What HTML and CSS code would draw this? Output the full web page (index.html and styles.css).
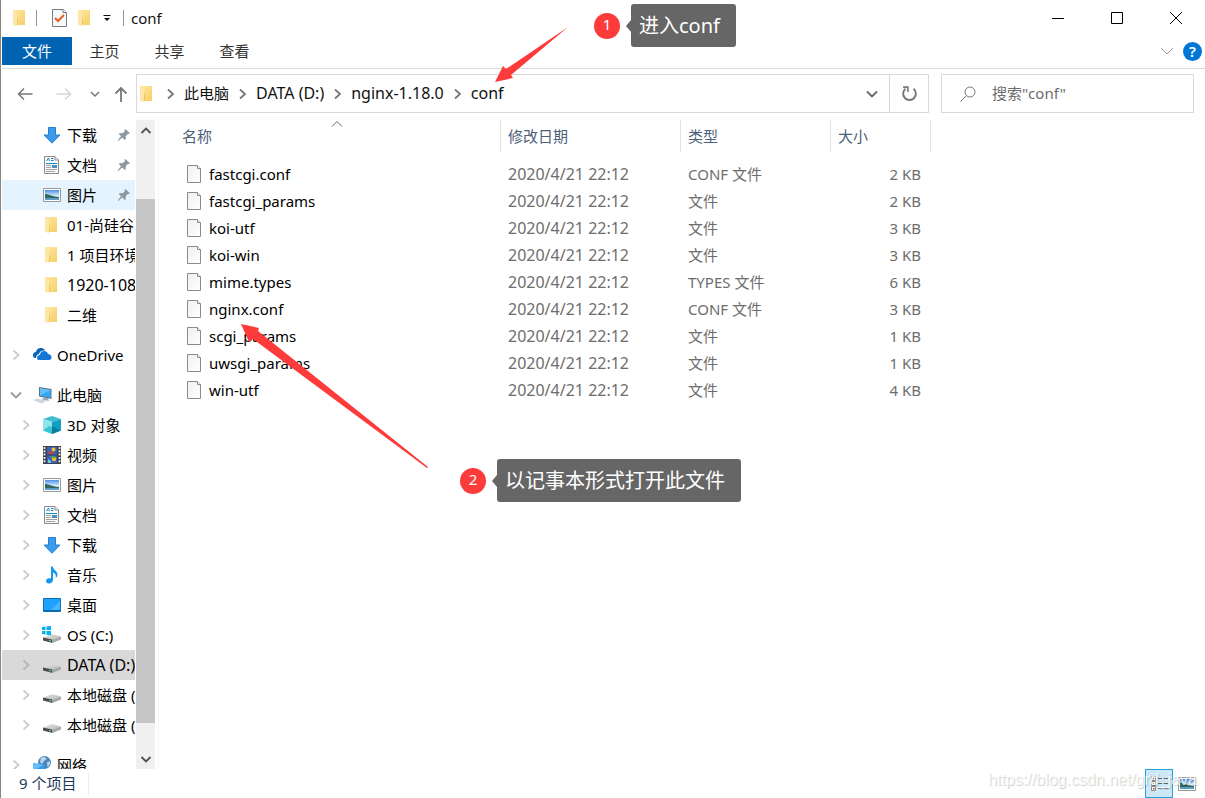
FILE: index.html
```html
<!DOCTYPE html>
<html lang="zh-CN">
<head>
<meta charset="utf-8">
<title>conf</title>
<link rel="stylesheet" href="styles.css">
</head>
<body>
<svg class="defs" width="0" height="0" aria-hidden="true">
  <defs>
    <linearGradient id="g-folder" x1="0" y1="0" x2="1" y2="1"><stop offset="0" stop-color="#ffe9a6"/><stop offset="1" stop-color="#f6cf66"/></linearGradient>
    <linearGradient id="g-sky" x1="0" y1="0" x2="0" y2="1"><stop offset="0" stop-color="#4f8fe8"/><stop offset=".6" stop-color="#d8f0fb"/><stop offset="1" stop-color="#a9cfe4"/></linearGradient>
    <linearGradient id="g-drive" x1="0" y1="0" x2="1" y2="1"><stop offset="0" stop-color="#e9e9e9"/><stop offset="1" stop-color="#b5b5b5"/></linearGradient>
    <linearGradient id="g-page" x1="0" y1="0" x2="1" y2="1"><stop offset="0" stop-color="#eef0f0"/><stop offset="1" stop-color="#ffffff"/></linearGradient>
  </defs>
  <symbol id="folder" viewBox="0 0 20 20"><path d="M3 2H15V17H3Z" fill="url(#g-folder)"/><path d="M3 2L7 4.500V18.500L3 16.500Z" fill="#ffe6a8"/><path d="M7.500 10V17" stroke="#eec65c" fill="none"/></symbol>
  <symbol id="chev" viewBox="0 0 12 12"><path d="M3.500 1.500L8.500 6L3.500 10.500" fill="none" stroke="currentColor" stroke-width="1.800"/></symbol>
  <symbol id="chevdown" viewBox="0 0 12 12"><path d="M1 3.500L6 8.500L11 3.500" fill="none" stroke="currentColor" stroke-width="1.800"/></symbol>
  <symbol id="pin" viewBox="0 0 14 14"><path d="M8.300 1L13 5.200L11.800 6L11 5.800L8.700 8.300L8.800 11L7.800 12L5.200 9.600L1.300 13L.7 12.500L4 8.300L1.800 6L2.800 5L5.700 5.200L8 3L7.500 1.800Z" fill="#8c98a2"/></symbol>
  <symbol id="download" viewBox="0 0 20 20"><path d="M6.500 2.500H13.500V10H18L10 18.200L2 10H6.500Z" fill="#3a9bea" stroke="#2480cf"/></symbol>
  <symbol id="docs" viewBox="0 0 20 20"><path d="M2.500 1.500H13L16.500 5V18.500H2.500Z" fill="#fbfbfb" stroke="#8a8a8a"/><path d="M13 1.500V5H16.500" fill="#eee" stroke="#8a8a8a"/><path d="M4.500 6L6.500 3L7.500 6M9 3.500H11.500M9 5.500H11.500" fill="none" stroke="#1687c9"/><path d="M4 8.500H15" stroke="#1687c9"/><path d="M4 10.500H9M4 12.500H9M4 14.500H15M4 16.500H13" stroke="#a2a2a2"/><path d="M10 10H15V13H10Z" fill="#4f8fbe"/></symbol>
  <symbol id="picture" viewBox="0 0 20 20"><path d="M1.500 3.500H18.500V16.500H1.500Z" fill="#fff" stroke="#999"/><path d="M3 5H17V15H3Z" fill="url(#g-sky)"/><path d="M3 9C7 9 9 11.500 17 12V13H3Z" fill="#31685a"/><path d="M3 13H17V15H3Z" fill="#5b9dc4"/></symbol>
  <symbol id="onedrive" viewBox="0 0 20 20"><path d="M1 10C1 8 2.500 7 4 7C4.500 4 7 2.500 9.500 3C11 3.200 12.500 4 13 5.500C9.500 5 7.500 7 7 9C5 9.500 4 11 4 13H3C1.500 13 1 11.500 1 10Z" fill="#0a63b8"/><path d="M5 13C5 11 6.500 10 8 10C8 7.500 10 6 12 6C14 6 15.500 7.200 16 9C18 9 19.500 10.500 19.500 12.500C19.500 14 18.500 15 17 15H7C5.800 15 5 14.200 5 13Z" fill="#1177d7"/></symbol>
  <symbol id="pc" viewBox="0 0 20 20"><path d="M7 2L19.500 4V14L7 11.500Z" fill="#5b7386"/><path d="M8 3.200L18.700 5V12.700L8 10.600Z" fill="#35a8f3"/><path d="M8 3.200L18.700 5L8 10.600Z" fill="#64bffa"/><path d="M11.500 12.500L16 13.300L17 16L10 14.500Z" fill="#9aa9b5"/><path d="M1 15L6 13.500L14.500 16L9.500 18.500Z" fill="#cdd4da"/></symbol>
  <symbol id="cube" viewBox="0 0 20 20"><path d="M10 1L19 4L10 7L1 4Z" fill="#3dbdd0"/><path d="M1 4L10 7V19L1 15.500Z" fill="#8fe5ec"/><path d="M19 4L10 7V19L19 15.500Z" fill="#13a0c2"/><path d="M1 15.500L7 11L10 12V19Z" fill="#38c4d5"/><path d="M10 11L19 15.500L10 19Z" fill="#0c7f9f"/></symbol>
  <symbol id="video" viewBox="0 0 20 20"><path d="M1 1H19V19H1Z" fill="#3f3f46"/><path d="M2.500 2V18M17.500 2V18" stroke="#ececec" stroke-width="1.800" stroke-dasharray="2 1.300"/><path d="M5 2H15V9.500H5ZM5 10.500H15V18H5Z" fill="#3564c0"/><circle cx="11.500" cy="4.500" r="2" fill="#edc22f"/><path d="M7 6L12 7L11 9H6Z" fill="#c5433b"/><circle cx="12" cy="14" r="2.200" fill="#edc22f"/><path d="M9 11H13V13H8Z" fill="#50a144"/><path d="M6 14L9 16V18H6Z" fill="#7ec0ee"/></symbol>
  <symbol id="music" viewBox="0 0 20 20"><path d="M9 1.500H11C11 5 15.500 6 15.500 9.500C15.500 11 14.500 12.500 13.500 13C15 9.500 12 8 11 7.500V14.500C11 17 9 18.500 7 18.500C5 18.500 4 17.300 4 16C4 13.800 6.500 12.500 9 13.500Z" fill="#1297ee"/></symbol>
  <symbol id="desktop" viewBox="0 0 20 20"><path d="M1.500 3.500H18.500V16.500H1.500Z" fill="#1ea2fd" stroke="#0872b9"/><path d="M9 15L18 6V15Z" fill="#49b5ff"/><path d="M2 15.500H18" stroke="#0869a8"/></symbol>
  <symbol id="drive" viewBox="0 0 20 20"><path d="M1 12.500L10 9L19 11.500L10.500 14.500Z" fill="url(#g-drive)"/><path d="M1 12.500L10.500 14.500V18L1 15.500Z" fill="#4c4c4c"/><path d="M10.500 14.500L19 11.500V14.500L10.500 18Z" fill="#a8a8a8"/><path d="M7 15.700H9" stroke="#58d26a" stroke-width="1.300"/></symbol>
  <symbol id="osdrive" viewBox="0 0 20 20"><use href="#drive"/><path d="M0 2L3.500 1.500V5H0ZM4.500 1.400L9 1V5H4.500ZM0 6H3.500V9.500L0 9ZM4.500 6H9V10.200L4.500 9.700Z" fill="#00b3ee"/></symbol>
  <symbol id="network" viewBox="0 0 20 20"><circle cx="12.500" cy="7.500" r="6.500" fill="#4c87b8"/><path d="M9 3C11 1 14 2 14.500 4L12 6L10 9L8 7ZM15 7L18 6.500C18.500 9 17 11 15.500 12Z" fill="#b7d8ed"/><path d="M1 8L12 10V18L1 15.500Z" fill="#2a9df1"/><path d="M1 8L12 10L1 15.500Z" fill="#63bef9"/></symbol>
  <symbol id="file" viewBox="0 0 16 20"><path d="M1.500 1.500H11.500L14.500 4.500V18.500H1.500Z" fill="url(#g-page)" stroke="#8b8b8b"/><path d="M11.500 1.500V4.500H14.500" fill="#fff" stroke="#8b8b8b"/></symbol>
</svg>

<div class="window">
  <header class="titlebar">
    <div class="quick">
      <svg class="icon"><use href="#folder"/></svg>
      <span class="bar"></span>
      <button class="plain" aria-label="属性"><svg class="icon" viewBox="0 0 20 20"><path d="M3.500 1.500H14L17.500 4.500V18.500H3.500Z" fill="#f7f8fa" stroke="#777c83"/><path d="M14 1.500V4.500H17.500" fill="#fff" stroke="#777c83"/><path d="M6 10L9 13L15 7" fill="none" stroke="#e75a23" stroke-width="2"/></svg></button>
      <button class="plain" aria-label="新建文件夹"><svg class="icon"><use href="#folder"/></svg></button>
      <button class="plain" aria-label="自定义快速访问工具栏"><svg class="icon-s" viewBox="0 0 12 12"><path d="M2.500 3.500H9.500" stroke="#111"/><path d="M3 6H9L6 9Z" fill="#111"/></svg></button>
      <span class="bar"></span>
    </div>
    <h1 class="title">conf</h1>
    <div class="controls">
      <button class="plain" aria-label="最小化"><svg viewBox="0 0 14 14"><path d="M1 7.500H13" stroke="#000"/></svg></button>
      <button class="plain" aria-label="最大化"><svg viewBox="0 0 14 14"><path d="M1.500 1.500H12.500V12.500H1.500Z" fill="none" stroke="#000"/></svg></button>
      <button class="plain" aria-label="关闭"><svg viewBox="0 0 14 14"><path d="M1 1L13 13M13 1L1 13" stroke="#000" fill="none"/></svg></button>
    </div>
  </header>

  <nav class="ribbon">
    <button class="tab tab-file">文件</button>
    <button class="tab">主页</button>
    <button class="tab">共享</button>
    <button class="tab">查看</button>
    <div class="ribbon-end">
      <button class="plain" aria-label="展开功能区"><svg class="icon-m" viewBox="0 0 14 14"><path d="M1 4L7 10L13 4" fill="none" stroke="#999"/></svg></button>
      <button class="help" aria-label="帮助">?</button>
    </div>
  </nav>

  <div class="navrow">
    <div class="navbtns">
      <button class="plain" aria-label="后退"><svg viewBox="0 0 16 16"><path d="M15.500 8H1.500M7 2.500L1.500 8L7 13.500" fill="none" stroke="#777" stroke-width="1.500"/></svg></button>
      <button class="plain" aria-label="前进"><svg viewBox="0 0 16 16"><path d="M.5 8H14.500M9 2.500L14.500 8L9 13.500" fill="none" stroke="#d6d6d6" stroke-width="1.500"/></svg></button>
      <button class="plain nav-recent" aria-label="最近位置"><svg viewBox="0 0 10 10"><path d="M1 3L5 7L9 3" fill="none" stroke="#777" stroke-width="1.500"/></svg></button>
      <button class="plain" aria-label="上移"><svg viewBox="0 0 16 16"><path d="M8 16V2M2.500 7.500L8 2L13.500 7.500" fill="none" stroke="#777" stroke-width="1.800"/></svg></button>
    </div>
    <div class="address">
      <svg class="icon"><use href="#folder"/></svg>
      <svg class="sep"><use href="#chev"/></svg>
      <button class="crumb">此电脑</button>
      <svg class="sep"><use href="#chev"/></svg>
      <button class="crumb latin">DATA (D:)</button>
      <svg class="sep"><use href="#chev"/></svg>
      <button class="crumb latin">nginx-1.18.0</button>
      <svg class="sep"><use href="#chev"/></svg>
      <button class="crumb latin">conf</button>
      <button class="plain history" aria-label="历史记录"><svg viewBox="0 0 12 12"><use href="#chevdown"/></svg></button>
      <button class="plain refresh" aria-label="刷新"><svg viewBox="0 0 16 16"><path d="M4.200 3.500A6 6 0 1 0 11.800 3.500" fill="none" stroke="#777" stroke-width="1.800"/><path d="M2 2H6.500V6.500" fill="none" stroke="#777" stroke-width="1.500"/></svg></button>
    </div>
    <label class="search">
      <svg viewBox="0 0 16 16"><circle cx="10" cy="6" r="5" fill="none" stroke="#777"/><path d="M6.500 9.500L.5 15.500" stroke="#777"/></svg>
      <input type="text" placeholder='搜索"conf"' aria-label="搜索">
    </label>
  </div>

  <main class="body">
    <aside class="tree">
      <ul>
        <li><button class="node l2"><svg class="icon"><use href="#download"/></svg><span>下载</span><svg class="pin"><use href="#pin"/></svg></button></li>
        <li><button class="node l2"><svg class="icon"><use href="#docs"/></svg><span>文档</span><svg class="pin"><use href="#pin"/></svg></button></li>
        <li><button class="node l2 hover"><svg class="icon"><use href="#picture"/></svg><span>图片</span><svg class="pin"><use href="#pin"/></svg></button></li>
        <li><button class="node l2"><svg class="icon"><use href="#folder"/></svg><span>01-尚硅谷</span></button></li>
        <li><button class="node l2"><svg class="icon"><use href="#folder"/></svg><span>1 项目环境</span></button></li>
        <li><button class="node l2"><svg class="icon"><use href="#folder"/></svg><span class="latin">1920-108</span></button></li>
        <li><button class="node l2"><svg class="icon"><use href="#folder"/></svg><span>二维</span></button></li>
      </ul>
      <ul>
        <li><button class="node"><svg class="twist"><use href="#chev"/></svg><svg class="icon"><use href="#onedrive"/></svg><span>OneDrive</span></button></li>
      </ul>
      <ul>
        <li><button class="node"><svg class="twist open"><use href="#chevdown"/></svg><svg class="icon"><use href="#pc"/></svg><span>此电脑</span></button></li>
        <li><button class="node l2"><svg class="twist"><use href="#chev"/></svg><svg class="icon"><use href="#cube"/></svg><span>3D 对象</span></button></li>
        <li><button class="node l2"><svg class="twist"><use href="#chev"/></svg><svg class="icon"><use href="#video"/></svg><span>视频</span></button></li>
        <li><button class="node l2"><svg class="twist"><use href="#chev"/></svg><svg class="icon"><use href="#picture"/></svg><span>图片</span></button></li>
        <li><button class="node l2"><svg class="twist"><use href="#chev"/></svg><svg class="icon"><use href="#docs"/></svg><span>文档</span></button></li>
        <li><button class="node l2"><svg class="twist"><use href="#chev"/></svg><svg class="icon"><use href="#download"/></svg><span>下载</span></button></li>
        <li><button class="node l2"><svg class="twist"><use href="#chev"/></svg><svg class="icon"><use href="#music"/></svg><span>音乐</span></button></li>
        <li><button class="node l2"><svg class="twist"><use href="#chev"/></svg><svg class="icon"><use href="#desktop"/></svg><span>桌面</span></button></li>
        <li><button class="node l2"><svg class="twist"><use href="#chev"/></svg><svg class="icon"><use href="#osdrive"/></svg><span>OS (C:)</span></button></li>
        <li><button class="node l2 selected"><svg class="twist"><use href="#chev"/></svg><svg class="icon"><use href="#drive"/></svg><span class="latin">DATA (D:)</span></button></li>
        <li><button class="node l2"><svg class="twist"><use href="#chev"/></svg><svg class="icon"><use href="#drive"/></svg><span>本地磁盘 (</span></button></li>
        <li><button class="node l2"><svg class="twist"><use href="#chev"/></svg><svg class="icon"><use href="#drive"/></svg><span>本地磁盘 (</span></button></li>
      </ul>
      <ul>
        <li><button class="node"><svg class="twist"><use href="#chev"/></svg><svg class="icon"><use href="#network"/></svg><span>网络</span></button></li>
      </ul>
    </aside>
    <div class="scroll">
      <button class="plain" aria-label="向上滚动"><svg viewBox="0 0 12 12"><path d="M1.500 8L6 3.500L10.500 8" fill="none" stroke="#505050" stroke-width="1.800"/></svg></button>
      <div class="track"><div class="thumb"></div></div>
      <button class="plain" aria-label="向下滚动"><svg viewBox="0 0 12 12"><path d="M1.500 4L6 8.500L10.500 4" fill="none" stroke="#505050" stroke-width="1.800"/></svg></button>
    </div>
    <section class="files">
      <table>
        <colgroup><col class="c-name"><col class="c-date"><col class="c-type"><col class="c-size"></colgroup>
        <thead>
          <tr><th>名称<svg class="sort" viewBox="0 0 12 8"><path d="M1 6.500L6 1.500L11 6.500" fill="none" stroke="#666"/></svg></th><th>修改日期</th><th>类型</th><th>大小</th></tr>
        </thead>
        <tbody>
          <tr><td><div class="name"><svg><use href="#file"/></svg>fastcgi.conf</div></td><td class="latin">2020/4/21 22:12</td><td>CONF 文件</td><td>2 KB</td></tr>
          <tr><td><div class="name"><svg><use href="#file"/></svg>fastcgi_params</div></td><td class="latin">2020/4/21 22:12</td><td>文件</td><td>2 KB</td></tr>
          <tr><td><div class="name"><svg><use href="#file"/></svg>koi-utf</div></td><td class="latin">2020/4/21 22:12</td><td>文件</td><td>3 KB</td></tr>
          <tr><td><div class="name"><svg><use href="#file"/></svg>koi-win</div></td><td class="latin">2020/4/21 22:12</td><td>文件</td><td>3 KB</td></tr>
          <tr><td><div class="name"><svg><use href="#file"/></svg>mime.types</div></td><td class="latin">2020/4/21 22:12</td><td>TYPES 文件</td><td>6 KB</td></tr>
          <tr><td><div class="name"><svg><use href="#file"/></svg>nginx.conf</div></td><td class="latin">2020/4/21 22:12</td><td>CONF 文件</td><td>3 KB</td></tr>
          <tr><td><div class="name"><svg><use href="#file"/></svg>scgi_params</div></td><td class="latin">2020/4/21 22:12</td><td>文件</td><td>1 KB</td></tr>
          <tr><td><div class="name"><svg><use href="#file"/></svg>uwsgi_params</div></td><td class="latin">2020/4/21 22:12</td><td>文件</td><td>1 KB</td></tr>
          <tr><td><div class="name"><svg><use href="#file"/></svg>win-utf</div></td><td class="latin">2020/4/21 22:12</td><td>文件</td><td>4 KB</td></tr>
        </tbody>
      </table>
    </section>
  </main>

  <footer class="status">
    <span class="count">9 个项目</span>
    <div class="views">
      <button class="view active" aria-label="详细信息"><svg viewBox="0 0 20 20"><path d="M2.500 2.500H6.500V6.500H2.500ZM2.500 7.500H6.500V11.500H2.500ZM2.500 12.500H6.500V16.500H2.500Z" fill="#fff" stroke="#8a8a8a"/><path d="M4 4H5V5H4Z" fill="#457bb0"/><path d="M4 9H5V10H4Z" fill="#5b9a3c"/><path d="M4 14H5.500V15.500H4Z" fill="#c33"/><path d="M9 4.500H13M14.500 4.500H19M9 9.500H13M14.500 9.500H19M9 14.500H13M14.500 14.500H19" stroke="#666"/></svg></button>
      <button class="view" aria-label="大缩略图"><svg viewBox="0 0 20 20"><use href="#picture"/></svg></button>
    </div>
  </footer>

  <div class="watermark">https://blog.csdn.net/grd_java</div>

  <svg class="arrow arrow-1" viewBox="0 0 74 57" aria-hidden="true"><path d="M0 56L8 40L11 43L73 1L16 49L18 52Z" fill="#fc3b3a"/></svg>
  <svg class="arrow arrow-2" viewBox="0 0 188 144" aria-hidden="true"><path d="M1 0L19 4L18 7L188 143L187 144L13 15L9 18Z" fill="#fc3b3a"/></svg>
  <div class="callout callout-1"><span class="badge">1</span><span class="bubble">进入conf</span></div>
  <div class="callout callout-2"><span class="badge">2</span><span class="bubble">以记事本形式打开此文件</span></div>
</div>
</body>
</html>
```
FILE: styles.css
```css
* { box-sizing: border-box; }

body {
  margin: 0;
  background: #fff;
  color: #111;
  font: 15px/20px "Noto Sans", "Noto Sans CJK SC", sans-serif;
}

button {
  border: 0;
  padding: 0;
  background: none;
  color: inherit;
  font: inherit;
}

svg { display: block; flex: none; }
ul { list-style: none; margin: 0; padding: 0; }
.defs { position: absolute; }
.icon { width: 20px; height: 20px; }
.icon-s { width: 12px; height: 12px; }
.icon-m { width: 14px; height: 14px; }
.plain { display: flex; align-items: center; justify-content: center; }
.latin { font-size: 16px; }

.window {
  position: relative;
  display: flex;
  flex-direction: column;
  height: 100vh;
  border-left: 1px solid #8b877f;
  padding-left: 1px;
  overflow: hidden;
}

/* Title bar */
.titlebar { display: flex; align-items: center; height: 36px; }
.quick { display: flex; align-items: center; gap: 6px; padding-left: 8px; }
.bar { width: 1px; height: 16px; background: #999; }
.quick .bar:nth-child(2) { margin-right: 6px; }
.quick .bar:last-child { margin-left: 4px; }
.title { margin: 0 0 0 7px; font-size: 15px; font-weight: 400; }
.controls { display: flex; margin-left: auto; }
.controls .plain { width: 59px; height: 36px; }
.controls svg { width: 14px; height: 14px; }

/* Ribbon */
.ribbon { display: flex; align-items: center; height: 33px; padding: 1px 0 3px; border-bottom: 1px solid #dadbdc; }
.tab { width: 65px; height: 28px; color: #333; }
.tab-file { width: 70px; background: #0063b1; color: #fff; }
.ribbon-end { display: flex; align-items: center; gap: 9px; margin-left: auto; padding-right: 3px; }
.help { width: 19px; height: 19px; border-radius: 50%; background: #0076d7; color: #fff; font-weight: 600; line-height: 19px; }

/* Navigation row */
.navrow { display: flex; height: 51px; padding: 5px 11px 7px 0; }
.navbtns { display: flex; align-items: center; width: 134px; padding-left: 15px; gap: 23px; }
.navbtns svg { width: 16px; height: 16px; }
.navbtns .nav-recent { width: 10px; margin: 0 -10px 0 -5px; }
.navbtns .nav-recent svg { width: 10px; height: 10px; }
.address { display: flex; flex: 1; align-items: center; border: 1px solid #d9d9d9; }
.crumb { padding-bottom: 2px; }
.sep { width: 27px; height: 12px; color: #777; }
.history { width: 34px; margin-left: auto; color: #666; }
.history svg { width: 12px; height: 12px; }
.refresh { width: 39px; height: 100%; border-left: 1px solid #d9d9d9; }
.refresh svg { width: 17px; height: 17px; }
.search { display: flex; align-items: center; gap: 16px; width: 253px; margin-left: 12px; padding-left: 18px; border: 1px solid #d9d9d9; }
.search svg { width: 16px; height: 16px; }
.search input { flex: 1; min-width: 0; border: 0; padding: 0 0 2px; background: none; font: inherit; outline: 0; }
.search input::placeholder { color: #6d6d6d; opacity: 1; }

/* Folder tree */
.body { display: flex; flex: 1; min-height: 0; }
.tree { width: 133px; overflow: hidden; }
.tree ul + ul { margin-top: 10px; }
.node { display: flex; align-items: center; justify-content: flex-end; width: 100%; height: 30px; text-align: left; white-space: nowrap; color: #000; }
.node span { width: 78px; margin-left: 5px; overflow: hidden; flex: none; }
.node.l2 span { width: 68px; }
.node.l2 { position: relative; }
.twist { width: 12px; height: 12px; margin-right: 10px; color: #ccc; }
.twist.open { color: #999; }
.pin { position: absolute; right: 4px; width: 14px; height: 14px; }
.hover { background: #e5f3ff; }
.selected { background: #d9d9d9; }
.selected .twist { color: #b5b5b5; }

.scroll { display: flex; flex-direction: column; width: 19px; margin-left: 1px; background: #f0f0f0; }
.scroll .plain { height: 21px; }
.scroll svg { width: 12px; height: 12px; }
.track { display: flex; flex: 1; padding: 58px 0 25px; }
.thumb { flex: 1; background: #c6c6c6; }

/* File list */
.files { flex: 1; margin-left: 3px; padding-left: 16px; border-left: 1px solid #f3f3f3; }
table { width: 756px; table-layout: fixed; border-collapse: separate; border-spacing: 0; }
.c-name { width: 326px; }
.c-date { width: 180px; }
.c-type { width: 150px; }
.c-size { width: 100px; }
th { position: relative; height: 32px; padding: 0 7px; border-right: 1px solid #e2e2e2; text-align: left; font-weight: 400; color: #4c607a; }
tbody::before { content: ""; display: block; height: 8px; }
td { height: 27px; padding: 0 7px; color: #6d6d6d; }
td:last-child { padding-right: 10px; text-align: right; }
.name { display: flex; align-items: center; gap: 7px; padding-left: 4px; color: #000; }
.name svg { width: 16px; height: 20px; }
.sort { position: absolute; top: 0; left: 48%; width: 12px; height: 8px; }

/* Status bar */
.status { display: flex; align-items: center; height: 29px; padding: 0 4px 0 17px; }
.count { padding: 0 12px 2px 0; border-right: 1px solid #eee; color: #1e395b; }
.views { display: flex; margin-left: auto; }
.view { display: flex; align-items: center; justify-content: center; width: 28px; height: 29px; }
.view.active { border: 1px solid #26a0da; background: #cce8f6; }
.view svg { width: 20px; height: 20px; }

/* Annotations */
.watermark { position: absolute; right: 8px; bottom: 8px; color: rgba(255, 255, 255, .8); font: 16px/20px "Liberation Sans", sans-serif; text-shadow: 1px 1px 1px rgba(0, 0, 0, .2); pointer-events: none; }
.arrow { position: absolute; pointer-events: none; }
.arrow-1 { left: 494px; top: 26px; width: 74px; height: 57px; }
.arrow-2 { left: 239px; top: 324px; width: 188px; height: 144px; }
.callout { position: absolute; display: flex; align-items: center; gap: 11px; color: #fff; }
.callout-1 { left: 593px; top: 4px; }
.callout-2 { left: 459px; top: 459px; }
.badge { width: 26px; height: 26px; border-radius: 50%; background: #fc3b3a; text-align: center; line-height: 23px; }
.bubble { position: relative; padding: 0 16px 0 8px; border-radius: 3px; background: #666; font-size: 20px; line-height: 43px; white-space: nowrap; }
.bubble::before { content: ""; position: absolute; left: -5px; top: 50%; margin-top: -6px; border: 6px solid transparent; border-left: 0; border-right: 5px solid #666; }
```
